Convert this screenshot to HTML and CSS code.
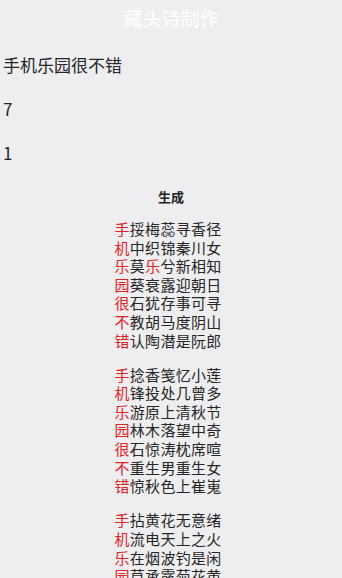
FILE: index.html
```html
<!doctype html>
<html lang="zh">
<head>
<meta charset="utf-8">
<title>藏头诗制作</title>
<meta name="viewport" content="width=device-width, initial-scale=1.0">
<link rel="stylesheet" href="styles.css">
</head>
<body>
<div id="container">
    <header class="title">藏头诗制作</header>

    <div class="field">手机乐园很不错</div>
    <div class="field">7</div>
    <div class="field">1</div>

    <div class="action"><button class="button" type="button">生成</button></div>

    <section class="poems">
        <div class="poem">
            <p><span class="head">手</span>挼梅蕊寻香径</p>
            <p><span class="head">机</span>中织锦秦川女</p>
            <p><span class="head">乐</span>莫<span class="head">乐</span>兮新相知</p>
            <p><span class="head">园</span>葵衰露迎朝日</p>
            <p><span class="head">很</span>石犹存事可寻</p>
            <p><span class="head">不</span>教胡马度阴山</p>
            <p><span class="head">错</span>认陶潜是阮郎</p>
        </div>
        <div class="poem">
            <p><span class="head">手</span>捻香笺忆小莲</p>
            <p><span class="head">机</span>锋投处几曾多</p>
            <p><span class="head">乐</span>游原上清秋节</p>
            <p><span class="head">园</span>林木落望中奇</p>
            <p><span class="head">很</span>石惊涛枕席喧</p>
            <p><span class="head">不</span>重生男重生女</p>
            <p><span class="head">错</span>惊秋色上崔嵬</p>
        </div>
        <div class="poem">
            <p><span class="head">手</span>拈黄花无意绪</p>
            <p><span class="head">机</span>流电天上之火</p>
            <p><span class="head">乐</span>在烟波钓是闲</p>
            <p><span class="head">园</span>草承露菊花黄</p>
        </div>
    </section>
</div>
</body>
</html>
```

FILE: styles.css
```css
/* reset */
* {
    margin: 0;
    padding: 0;
}

body {
    background: #eeedf0;
    color: #2b2b2b;
    font-family: "Noto Sans CJK SC", "Noto Sans", sans-serif;
    overflow: hidden;
}

.title {
    height: 36px;
    line-height: 36px;
    text-align: center;
    font-size: 19px;
    color: #ffffff;
}

.field {
    height: 44px;
    line-height: 44px;
    padding-left: 3px;
    font-size: 17px;
    color: #262626;
}
.field:first-of-type {
    margin-top: 7px;
}

.action {
    height: 42px;
    display: flex;
    align-items: center;
    justify-content: center;
}
.button {
    border: none;
    background: none;
    font-family: inherit;
    font-size: 13px;
    font-weight: bold;
    color: #222;
    cursor: pointer;
}

.poems {
    display: flex;
    flex-direction: column;
    align-items: center;
    margin-top: 3px;
    padding-right: 5px;
}
.poem {
    width: 108px;
    margin-bottom: 15.5px;
}
.poem p {
    font-size: 15px;
    line-height: 18.6px;
    letter-spacing: 0.3px;
    white-space: nowrap;
    color: #262626;
}
.head {
    color: #dc2426;
}
```
